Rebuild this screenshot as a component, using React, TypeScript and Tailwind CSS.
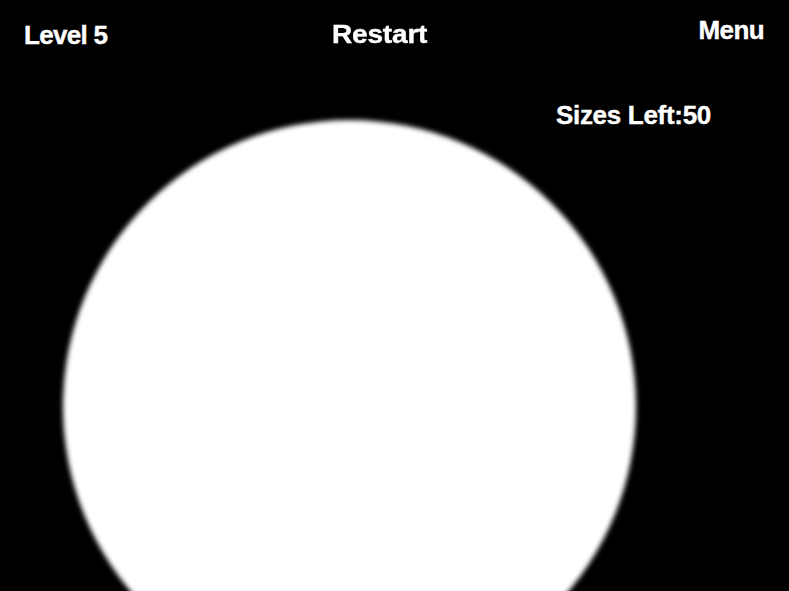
import React from "react";

export default function App() {
  return (
    <div
      className="relative w-full h-screen overflow-hidden bg-black text-white font-bold text-[26px] leading-[26px] [-webkit-text-stroke:0.4px_white]"
      style={{ fontFamily: '"Liberation Sans", Arial, sans-serif' }}
    >
      {/* game canvas: the ball */}
      <div className="absolute left-[63px] top-[120px] w-[573px] h-[573px] rounded-full bg-white blur-[2.5px]" />

      <div className="relative flex items-start">
        <div className="w-[332px] pl-[24px] pt-[22px] tracking-[-0.7px]">Level 5</div>
        <div className="pt-[21px]">
          <span className="inline-block origin-left scale-x-[1.08] tracking-[-0.2px]">Restart</span>
        </div>
        <div className="ml-auto pr-[25px] pt-[17px] tracking-[-0.6px]">Menu</div>
      </div>
      <div className="relative flex justify-end pr-[78px] mt-[54px]">
        <div className="tracking-[-0.3px]">Sizes Left:50</div>
      </div>
    </div>
  );
}
